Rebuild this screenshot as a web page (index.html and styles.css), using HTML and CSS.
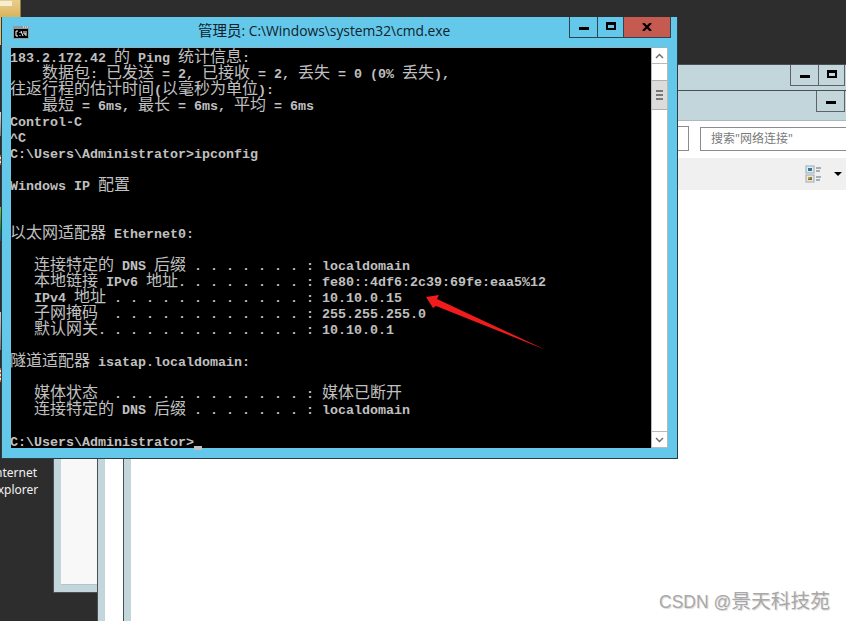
FILE: index.html
```html
<!DOCTYPE html>
<html lang="zh-CN">
<head>
<meta charset="utf-8">
<title>管理员: C:\Windows\system32\cmd.exe</title>
<link rel="stylesheet" href="styles.css">
</head>
<body>
<main class="desktop">
  <div class="folder"><div class="folder-paper"></div></div>
  <div class="strip s1"></div>
  <div class="strip s2"></div>
  <div class="strip s3"></div>
  <div class="strip s4"></div>
  <div class="strip s5"></div>
  <div class="strip s6"></div>
  <div class="ie-label">Internet<br>Explorer</div>

  <section class="bg-win win-a"><div class="win-a-body"></div></section>

  <section class="bg-win win-b">
    <div class="bg-title bg-title-b">
      <div class="bg-btn bg-btn-min"><span class="glyph-min"></span></div>
      <div class="bg-btn bg-btn-max"><span class="glyph-max"></span></div>
    </div>
    <div class="win-b-body"></div>
  </section>

  <section class="bg-win win-c">
    <div class="bg-title bg-title-c">
      <div class="bg-btn bg-btn-min"><span class="glyph-min"></span></div>
    </div>
    <div class="win-c-body">
      <div class="addr-row">
        <div class="refresh-box"></div>
        <div class="search-box">搜索"网络连接"</div>
      </div>
      <div class="toolbar">
        <svg class="view-icon" width="20" height="18" viewBox="0 0 20 18">
          <rect x="1" y="1" width="8" height="7" fill="#dfeaf2" stroke="#9aa9b5"/>
          <rect x="3" y="3" width="4" height="3" fill="#2f7a8c"/>
          <rect x="1" y="10" width="8" height="7" fill="#e8e8e0" stroke="#9aa9b5"/>
          <rect x="3" y="12" width="2" height="2" fill="#c9a020"/>
          <rect x="5" y="12" width="2" height="2" fill="#4a9a3a"/>
          <rect x="3" y="14" width="4" height="1" fill="#c04030"/>
          <path d="M11 3h5M11 6h4M11 12h5M11 15h4" stroke="#5a6a7a" fill="none"/>
        </svg>
        <svg class="drop-icon" width="8" height="6" viewBox="0 0 8 6"><path d="M0 1h8L4 5z" fill="#000"/></svg>
      </div>
    </div>
  </section>

  <section class="cmd">
    <header class="cmd-title">
      <svg class="cmd-icon" width="16" height="13" viewBox="0 0 16 13">
        <rect width="16" height="13" fill="#8f9aa0"/>
        <rect x="1" y="3" width="14" height="9" fill="#000"/>
        <path d="M10 1h1M12 1h1M14 1h1" stroke="#fff" stroke-width="1"/>
        <path d="M5 5H3v5h2M7 6v1M7 9v1M8 5l2 5M11 5v3h2M13 5v5" stroke="#fff" fill="none" stroke-width="1"/>
      </svg>
      <h1 class="cmd-caption"><span class="cap-cjk">管理员</span>: C:\Windows\system32\cmd.exe</h1>
      <div class="caption-btns">
        <div class="cap-btn cap-min"><span class="glyph-min"></span></div>
        <div class="cap-btn cap-max"><span class="glyph-max"></span></div>
        <div class="cap-btn cap-close">
          <svg width="10" height="8" viewBox="0 0 10 8"><path d="M1 0l8 8M9 0L1 8" stroke="#000" stroke-width="2.2" fill="none"/></svg>
        </div>
      </div>
    </header>
    <div class="cmd-client">
      <div class="console">
        <div class="ln">183.2.172.42 <span class="c">的</span> Ping <span class="c">统计信息</span>:</div>
        <div class="ln">    <span class="c">数据包</span>: <span class="c">已发送</span> = 2, <span class="c">已接收</span> = 2, <span class="c">丢失</span> = 0 (0% <span class="c">丢失</span>),</div>
        <div class="ln"><span class="c">往返行程的估计时间</span>(<span class="c">以毫秒为单位</span>):</div>
        <div class="ln">    <span class="c">最短</span> = 6ms, <span class="c">最长</span> = 6ms, <span class="c">平均</span> = 6ms</div>
        <div class="ln">Control-C</div>
        <div class="ln">^C</div>
        <div class="ln">C:\Users\Administrator&gt;ipconfig</div>
        <div class="ln"> </div>
        <div class="ln">Windows IP <span class="c">配置</span></div>
        <div class="ln"> </div>
        <div class="ln"> </div>
        <div class="ln"><span class="c">以太网适配器</span> Ethernet0:</div>
        <div class="ln"> </div>
        <div class="ln">   <span class="c">连接特定的</span> DNS <span class="c">后缀</span> . . . . . . . : localdomain</div>
        <div class="ln">   <span class="c">本地链接</span> IPv6 <span class="c">地址</span>. . . . . . . . : fe80::4df6:2c39:69fe:eaa5%12</div>
        <div class="ln">   IPv4 <span class="c">地址</span> . . . . . . . . . . . . : 10.10.0.15</div>
        <div class="ln">   <span class="c">子网掩码</span>  . . . . . . . . . . . . : 255.255.255.0</div>
        <div class="ln">   <span class="c">默认网关</span>. . . . . . . . . . . . . : 10.10.0.1</div>
        <div class="ln"> </div>
        <div class="ln"><span class="c">隧道适配器</span> isatap.localdomain:</div>
        <div class="ln"> </div>
        <div class="ln">   <span class="c">媒体状态</span>  . . . . . . . . . . . . : <span class="c">媒体已断开</span></div>
        <div class="ln">   <span class="c">连接特定的</span> DNS <span class="c">后缀</span> . . . . . . . : localdomain</div>
        <div class="ln"> </div>
        <div class="ln">C:\Users\Administrator&gt;<span class="cursor"></span></div>
      </div>
      <div class="scrollbar">
        <div class="sb-btn">
          <svg width="9" height="6" viewBox="0 0 9 6"><path d="M1 5l3.5-3.5L8 5" stroke="#6a6a6a" stroke-width="1.4" fill="none"/></svg>
        </div>
        <div class="sb-gap"></div>
        <div class="sb-thumb"><span></span><span></span><span></span></div>
        <div class="sb-track"></div>
        <div class="sb-btn sb-btn-down">
          <svg width="9" height="6" viewBox="0 0 9 6"><path d="M1 1l3.5 3.5L8 1" stroke="#6a6a6a" stroke-width="1.4" fill="none"/></svg>
        </div>
      </div>
    </div>
  </section>

  <svg class="arrow" width="130" height="64" viewBox="0 0 130 64">
    <polygon points="1,7 14,5 12,9 121,60 11,16 8,18" fill="#f01c1c"/>
  </svg>

  <div class="watermark">CSDN @<span class="wm-cjk">景天科技苑</span></div>
</main>
</body>
</html>
```
FILE: styles.css
```css
* { box-sizing: border-box; }
html, body { margin: 0; padding: 0; }
body { width: 846px; height: 621px; overflow: hidden; background: #2d2d2d; }

.desktop { position: relative; width: 846px; height: 621px; overflow: hidden; background: #2d2d2d; font-family: "Noto Sans", "Noto Sans CJK SC", sans-serif; }

/* desktop leftovers */
.folder { position: absolute; left: 0; top: 0; width: 21px; height: 18px; background: linear-gradient(#e9cf8b, #d9b25a); border-right: 1px solid #8f7a45; }
.folder-paper { width: 12px; height: 5px; margin-top: 1px; background: #f6edd2; }
.strip { position: absolute; left: 0; width: 1px; }
.s1 { top: 17px; height: 28px; background: #e2c167; }
.s2 { top: 112px; height: 24px; background: linear-gradient(#dfdfdf, #777); }
.s3 { top: 155px; height: 10px; background: repeating-linear-gradient(#d8622a 0 2px, #e8e8e8 2px 4px); }
.s4 { top: 207px; height: 34px; background: linear-gradient(#7ac943, #0b7f3a 70%, #1c4aa8); }
.s5 { top: 312px; height: 38px; background: linear-gradient(#ccc, #777); }
.s6 { top: 368px; height: 14px; background: repeating-linear-gradient(#d8622a 0 2px, #e8e8e8 2px 4px); }
.ie-label { position: absolute; left: -9px; top: 464px; color: #f2f2f2; font-size: 12px; line-height: 17px; white-space: nowrap; }

/* windows behind */
.bg-win { position: absolute; border: 1px solid #4c4f52; background: #c3d6dc; }
.win-a { left: 53px; top: 60px; width: 60px; height: 533px; padding: 0 7px 7px; display: flex; flex-direction: column; justify-content: flex-end; }
.win-a-body { height: 525px; background: #f8f8f8; border-bottom: 1px solid #b5c5cc; }
.win-b { left: 97px; top: 64px; width: 760px; height: 570px; display: flex; flex-direction: column; }
.win-b-body { flex: 1; margin-left: 7px; background: #fff; }
.win-c { left: 123px; top: 90px; width: 730px; height: 540px; display: flex; flex-direction: column; }
.win-c-body { flex: 1; margin-left: 7px; background: #fff; border-top: 1px solid #a9b9c0; }
.bg-title { display: flex; justify-content: flex-end; }
.bg-title-b { height: 25px; padding-right: 11px; }
.bg-title-c { height: 29px; padding-right: 7px; }
.bg-btn { display: flex; align-items: center; justify-content: center; height: 21px; border: 1px solid #5d6368; border-top: 0; background: #c3d6dc; margin-left: -1px; }
.bg-btn-min { width: 29px; }
.bg-btn-max { width: 27px; }

.glyph-min { display: block; width: 10px; height: 3px; margin-top: 3px; background: #000; }
.glyph-max { display: block; width: 10px; height: 8px; border: 2px solid #000; border-top-width: 3px; margin-top: -2px; }

.addr-row { display: flex; justify-content: flex-end; gap: 11px; height: 37px; padding: 5px 0 0; }
.refresh-box { width: 20px; height: 25px; border: 1px solid #8c8c8c; border-left: 0; }
.search-box { width: 152px; height: 24px; margin-top: 1px; border: 1px solid #8c8c8c; font-size: 12px; line-height: 22px; padding-left: 10px; color: #7a7a7a; }
.toolbar { height: 32px; display: flex; align-items: center; justify-content: flex-end; background: #f0f0f0; gap: 9px; padding-right: 10px; }

/* cmd window */
.cmd { position: absolute; left: 1px; top: 17px; width: 677px; height: 442px; background: #64c8eb; border: 1px solid #2d3b44; border-top: 0; display: flex; flex-direction: column; }
.cmd-title { position: relative; height: 31px; flex: none; display: flex; align-items: center; border-bottom: 1px solid #8fb6c7; margin: 0 9px 0 0; }
.cmd-icon { position: absolute; left: 11px; top: 9px; }
.cmd-caption { margin: 0 0 0 196px; font-size: 13.8px; line-height: 20px; font-weight: 400; color: #10222c; white-space: nowrap; font-family: "Open Sans", "Noto Sans CJK SC", sans-serif; position: relative; top: -1px; }
.cap-cjk { font-size: 14.5px; }
.caption-btns { position: absolute; top: 0; left: 567px; display: flex; height: 21px; }
.cap-btn { height: 21px; display: flex; align-items: center; justify-content: center; border: 1px solid #2d4553; border-top: 0; margin-right: -1px; }
.cap-min { width: 29px; }
.cap-max { width: 27px; }
.cap-close { width: 48px; background: #c45a50; }

.cmd-client { display: flex; margin-left: 9px; height: 400px; }
.console { width: 640px; height: 400px; background: #000; color: #c0c0c0; font-family: "Liberation Mono", monospace; font-weight: 700; font-size: 13.333px; padding-top: 3px; }
.ln { height: 16px; line-height: 16px; white-space: pre; margin-left: -1px; }
.c { font-family: "Noto Sans CJK SC", sans-serif; font-weight: 400; font-size: 16px; line-height: 0; }
.cursor { display: inline-block; width: 8px; height: 4px; background: #c0c0c0; vertical-align: -4px; }

.scrollbar { width: 17px; height: 400px; display: flex; flex-direction: column; background: #fff; border-left: 1px solid #b9b9b9; border-right: 1px solid #b9b9b9; border-bottom: 1px solid #b9b9b9; }
.sb-btn { height: 16px; flex: none; display: flex; align-items: center; justify-content: center; border-bottom: 1px solid #b9b9b9; }
.sb-btn-down { border-bottom: 0; border-top: 1px solid #b9b9b9; }
.sb-gap { height: 16px; flex: none; }
.sb-thumb { height: 30px; flex: none; background: #dcdcdc; border-top: 1px solid #b0b0b0; border-bottom: 1px solid #b0b0b0; display: flex; flex-direction: column; align-items: center; justify-content: center; gap: 2px; }
.sb-thumb span { display: block; width: 7px; height: 2px; background: #777; }
.sb-track { flex: 1; }

.arrow { position: absolute; left: 425px; top: 290px; }

.watermark { position: absolute; left: 659px; top: 587px; font-family: "Liberation Sans", "Noto Sans CJK SC", sans-serif; font-size: 17.5px; line-height: 26px; color: #a8a8a8; text-shadow: 1px 1px 1px rgba(0,0,0,.15); white-space: nowrap; }
.wm-cjk { font-family: "Noto Sans CJK SC", sans-serif; font-size: 19.8px; }
```
